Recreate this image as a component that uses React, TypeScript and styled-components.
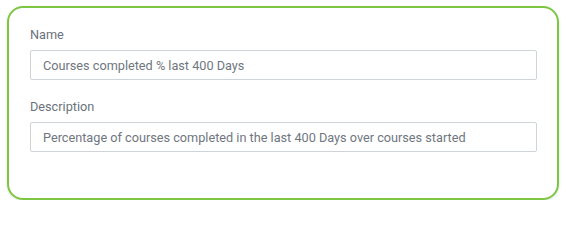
import styled, { createGlobalStyle } from 'styled-components'

const GlobalStyle = createGlobalStyle`
  html, body {
    margin: 0;
    padding: 0;
    background: #ffffff;
  }
  body {
    font-family: Roboto, 'Liberation Sans', Arial, sans-serif;
  }
`

const fields = [
  { label: 'Name', value: 'Courses completed % last 400 Days' },
  {
    label: 'Description',
    value: 'Percentage of courses completed in the last 400 Days over courses started'
  }
]

const App = () => {
  return (
    <>
      <GlobalStyle />
      <Page>
        <Card>
          {fields.map((f) => (
            <Field key={f.label}>
              <Label>{f.label}</Label>
              <Input readOnly value={f.value} />
            </Field>
          ))}
        </Card>
      </Page>
    </>
  )
}

export default App

const Page = styled.div`
  padding: 6px 7px 0 7px;
  width: 566px;
  box-sizing: border-box;
`

const Card = styled.div`
  box-sizing: border-box;
  width: 552px;
  height: 194px;
  border: 2px solid #7dc642;
  border-radius: 16px;
  padding: 19px 20px 0 21px;
  display: flex;
  flex-direction: column;
  gap: 19px;
  box-shadow: 0 1px 3px rgba(0, 0, 0, 0.12);
`

const Field = styled.div`
  display: flex;
  flex-direction: column;
`

const Label = styled.label`
  font-size: 12.7px;
  line-height: 16px;
  color: #6b727c;
  margin-bottom: 7px;
`

const Input = styled.input`
  box-sizing: border-box;
  width: 507px;
  height: 30px;
  border: 1px solid #cfd4d9;
  border-radius: 2px;
  padding: 0 12px;
  font-family: Roboto, 'Liberation Sans', Arial, sans-serif;
  font-size: 12.7px;
  color: #6f7680;
  background: #ffffff;
  outline: none;
`
